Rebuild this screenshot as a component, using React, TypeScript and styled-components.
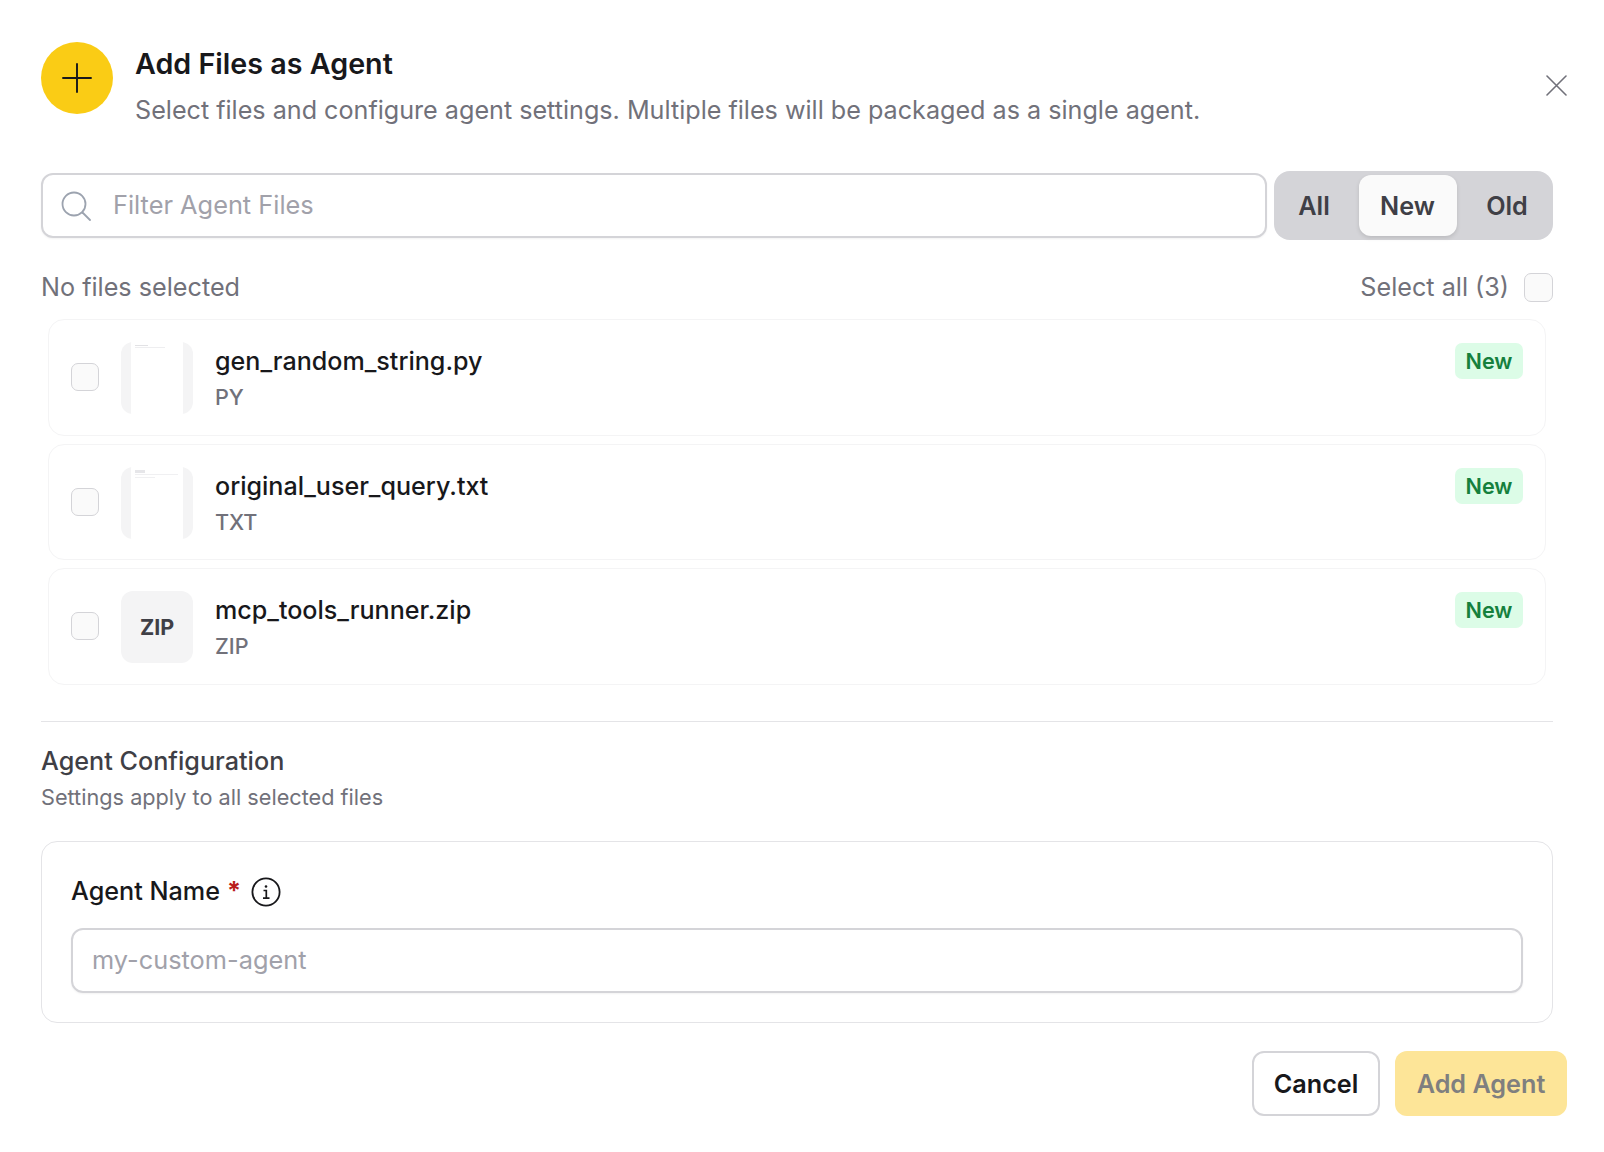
import React from "react";
import styled, { createGlobalStyle } from "styled-components";

const Global = createGlobalStyle`
  html, body { margin: 0; padding: 0; background: #fff; }
  body { font-family: Inter, "Liberation Sans", sans-serif; color: #18181b; -webkit-font-smoothing: antialiased; }
  * { box-sizing: border-box; }
`;

const Dialog = styled.div`
  width: 1604px;
  height: 1152px;
  padding: 42px 37px 0 41px;
  display: flex;
  flex-direction: column;
`;
const Header = styled.header`
  display: flex;
  align-items: flex-start;
  height: 129px;
`;
const IconCircle = styled.div`
  width: 72px;
  height: 72px;
  border-radius: 50%;
  background: #facc15;
  display: flex;
  align-items: center;
  justify-content: center;
  flex: none;
  margin-right: 22px;
  color: #18181b;
`;
const HeaderText = styled.div`
  flex: 1;
  padding-top: 3px;
`;
const Title = styled.h2`
  margin: 0;
  font-size: 28.7px;
  line-height: 38px;
  font-weight: 600;
  color: #18181b;
`;
const Subtitle = styled.p`
  margin: 11px 0 0;
  font-size: 25.15px;
  line-height: 32px;
  color: #71717a;
`;
const CloseButton = styled.button`
  border: 0;
  background: none;
  padding: 0;
  margin-top: 33px;
  width: 21px;
  height: 21px;
  color: #71717a;
  display: flex;
`;
const Main = styled.div`
  width: 1512px;
`;
const FilterBar = styled.div`
  display: flex;
  align-items: center;
  gap: 7px;
  height: 69px;
`;
const SearchBox = styled.label`
  flex: 1;
  height: 65px;
  display: flex;
  align-items: center;
  gap: 22px;
  padding: 0 18px;
  border: 2px solid #d4d4d8;
  border-radius: 12px;
  background: #fff;
  box-shadow: 0 1px 2px rgba(0, 0, 0, 0.05);
  color: #9ca3af;
`;
const TextInput = styled.input`
  flex: 1;
  min-width: 0;
  border: 0;
  outline: 0;
  padding: 0 0 2px;
  background: transparent;
  font: 400 25.35px Inter, sans-serif;
  color: #18181b;
  &::placeholder { color: #a1a1aa; opacity: 1; }
`;
const Segments = styled.div`
  width: 279px;
  height: 69px;
  padding: 4px;
  display: flex;
  gap: 8.5px;
  border-radius: 16px;
  background: #d4d4d8;
`;
const Segment = styled.button<{ $active?: boolean; $w: number }>`
  width: ${(p) => p.$w}px;
  border: 0;
  padding: 0;
  border-radius: 12px;
  font: 600 25.2px Inter, sans-serif;
  color: #3f3f46;
  background: ${(p) => (p.$active ? "#fafafa" : "transparent")};
  box-shadow: ${(p) => (p.$active ? "0 2px 4px rgba(0,0,0,.12)" : "none")};
`;
const SelectionRow = styled.div`
  display: flex;
  align-items: center;
  justify-content: space-between;
  height: 80px;
  padding-top: 14px;
  font-size: 25.2px;
  color: #71717a;
`;
const SelectAll = styled.div`
  display: flex;
  align-items: center;
  gap: 15px;
`;
const Check = styled.span`
  display: block;
  flex: none;
  width: 29px;
  height: 29px;
  border: 1.5px solid #d4d4d8;
  border-radius: 7px;
  background: #fafafa;
`;
const FileList = styled.div`
  display: flex;
  flex-direction: column;
  gap: 8px;
  padding: 0 7px;
  margin-top: -1px;
`;
const FileRow = styled.div`
  height: 116.5px;
  display: flex;
  align-items: flex-start;
  padding: 22px 22px 0;
  border: 1.5px solid #f4f4f5;
  border-radius: 16px;
  background: #fff;
`;
const RowCheck = styled(Check)`
  width: 28px;
  height: 28px;
  margin: 21px 22px 0 0;
`;
const Thumb = styled.div`
  position: relative;
  width: 72px;
  height: 72px;
  flex: none;
  border-radius: 12px;
  background: #f4f4f5;
  display: flex;
  align-items: center;
  justify-content: center;
  font-size: 21.5px;
  font-weight: 700;
  color: #3f3f46;
  overflow: hidden;
`;
const Preview = styled.svg`
  position: absolute;
  top: 0;
  left: 10px;
  width: 52px;
  height: 72px;
  background: #fff;
`;
const FileInfo = styled.div`
  flex: 1;
  margin-left: 22px;
  padding-top: 1px;
`;
const FileName = styled.div`
  font-size: 25.1px;
  line-height: 36px;
  font-weight: 500;
  color: #18181b;
`;
const FileType = styled.div`
  margin-top: 2px;
  font-size: 21.6px;
  line-height: 32px;
  font-weight: 500;
  color: #71717a;
`;
const Badge = styled.span`
  width: 68px;
  height: 36px;
  margin-top: 1px;
  display: flex;
  align-items: center;
  justify-content: center;
  border-radius: 7px;
  background: #dcfce7;
  color: #15803d;
  font-size: 21.6px;
  font-weight: 600;
`;
const Divider = styled.hr`
  border: 0;
  border-top: 1.5px solid #e4e4e7;
  margin: 36px 0 0;
`;
const SectionTitle = styled.h3`
  margin: 21px 0 0;
  font-size: 25.2px;
  line-height: 36px;
  font-weight: 500;
  color: #3f3f46;
`;
const SectionHint = styled.p`
  margin: 2px 0 0;
  font-size: 21.7px;
  line-height: 32px;
  color: #71717a;
`;
const ConfigCard = styled.div`
  margin-top: 28px;
  height: 182px;
  padding: 31px 29px 0;
  border: 1.5px solid #e4e4e7;
  border-radius: 16px;
`;
const FieldLabel = styled.div`
  display: flex;
  align-items: center;
  height: 36px;
  font-size: 25.2px;
  font-weight: 500;
  color: #18181b;
`;
const Required = styled.span`
  color: #b91c1c;
  font-weight: 700;
  margin-left: 7px;
  margin-right: 10px;
  position: relative;
  top: 0;
`;
const NameBox = styled.div`
  margin-top: 19px;
  height: 65px;
  display: flex;
  align-items: center;
  padding: 0 19px;
  border: 2px solid #d4d4d8;
  border-radius: 12px;
  box-shadow: 0 1px 2px rgba(0, 0, 0, 0.05);
`;
const Footer = styled.footer`
  margin-top: 28px;
  display: flex;
  justify-content: flex-end;
  gap: 15px;
`;
const Cancel = styled.button`
  width: 128px;
  height: 65px;
  padding: 2px 0 0;
  border: 2px solid #d4d4d8;
  border-radius: 12px;
  background: #fff;
  font: 600 25.2px Inter, sans-serif;
  color: #18181b;
`;
const Submit = styled.button`
  width: 172px;
  height: 65px;
  padding: 2px 0 0;
  border: 0;
  border-radius: 12px;
  background: #fde598;
  font: 600 25.2px Inter, sans-serif;
  color: #7f7f7f;
`;

const docLines = [
  [
    [4, 3, 13, 1, "#e2e2e5"],
    [4, 5, 30, 1, "#eeeef0"],
  ],
  [
    [4, 3, 10, 3, "#e6e6e9"],
    [4, 7, 43, 1, "#f0f0f2"],
    [4, 10, 20, 1, "#f0f0f2"],
  ],
] as const;

const Doc = ({ variant }: { variant: number }) => (
  <Preview viewBox="0 0 52 72" aria-hidden>
    {docLines[variant].map(([x, y, w, h, c], i) => (
      <rect key={i} x={x} y={y} width={w} height={h} fill={c} />
    ))}
  </Preview>
);

const files = [
  { name: "gen_random_string.py", type: "PY", preview: 0 },
  { name: "original_user_query.txt", type: "TXT", preview: 1 },
  { name: "mcp_tools_runner.zip", type: "ZIP", preview: -1 },
];

export default function App() {
  return (
    <>
      <Global />
      <Dialog>
        <Header>
          <IconCircle>
            <svg width="30" height="30" viewBox="0 0 30 30" fill="none" stroke="currentColor" strokeWidth="1.9" strokeLinecap="round">
              <path d="M15 1v28M1 15h28" />
            </svg>
          </IconCircle>
          <HeaderText>
            <Title>Add Files as Agent</Title>
            <Subtitle>Select files and configure agent settings. Multiple files will be packaged as a single agent.</Subtitle>
          </HeaderText>
          <CloseButton aria-label="Close">
            <svg width="21" height="21" viewBox="0 0 21 21" fill="none" stroke="currentColor" strokeWidth="1.6" strokeLinecap="round">
              <path d="M1 1l19 19M20 1L1 20" />
            </svg>
          </CloseButton>
        </Header>
        <Main>
          <FilterBar>
            <SearchBox>
              <svg width="30" height="30" viewBox="0 0 30 30" fill="none" stroke="currentColor" strokeWidth="1.8" strokeLinecap="round" style={{ flex: "none" }}>
                <circle cx="13" cy="13" r="11.5" />
                <path d="M21.5 21.5L29 29" />
              </svg>
              <TextInput placeholder="Filter Agent Files" />
            </SearchBox>
            <Segments>
              <Segment $w={72}>All</Segment>
              <Segment $w={98} $active>New</Segment>
              <Segment $w={84}>Old</Segment>
            </Segments>
          </FilterBar>
          <SelectionRow>
            <span>No files selected</span>
            <SelectAll>
              <span>Select all (3)</span>
              <Check />
            </SelectAll>
          </SelectionRow>
          <FileList>
            {files.map((f) => (
              <FileRow key={f.name}>
                <RowCheck />
                <Thumb>{f.preview >= 0 ? <Doc variant={f.preview} /> : "ZIP"}</Thumb>
                <FileInfo>
                  <FileName>{f.name}</FileName>
                  <FileType>{f.type}</FileType>
                </FileInfo>
                <Badge>New</Badge>
              </FileRow>
            ))}
          </FileList>
          <Divider />
          <SectionTitle>Agent Configuration</SectionTitle>
          <SectionHint>Settings apply to all selected files</SectionHint>
          <ConfigCard>
            <FieldLabel>
              Agent Name<Required>*</Required>
              <svg width="30" height="30" viewBox="0 0 30 30" fill="none" stroke="#18181b" style={{ position: "relative", top: 1 }}>
                <circle cx="15" cy="15" r="13.6" strokeWidth="1.8" />
                <path d="M12.5 13.5H15.3V21M12 21.2h6.5" strokeWidth="1.7" />
                <circle cx="15" cy="9.5" r="1.3" fill="#18181b" stroke="none" />
              </svg>
            </FieldLabel>
            <NameBox>
              <TextInput placeholder="my-custom-agent" />
            </NameBox>
          </ConfigCard>
        </Main>
        <Footer>
          <Cancel>Cancel</Cancel>
          <Submit>Add Agent</Submit>
        </Footer>
      </Dialog>
    </>
  );
}
